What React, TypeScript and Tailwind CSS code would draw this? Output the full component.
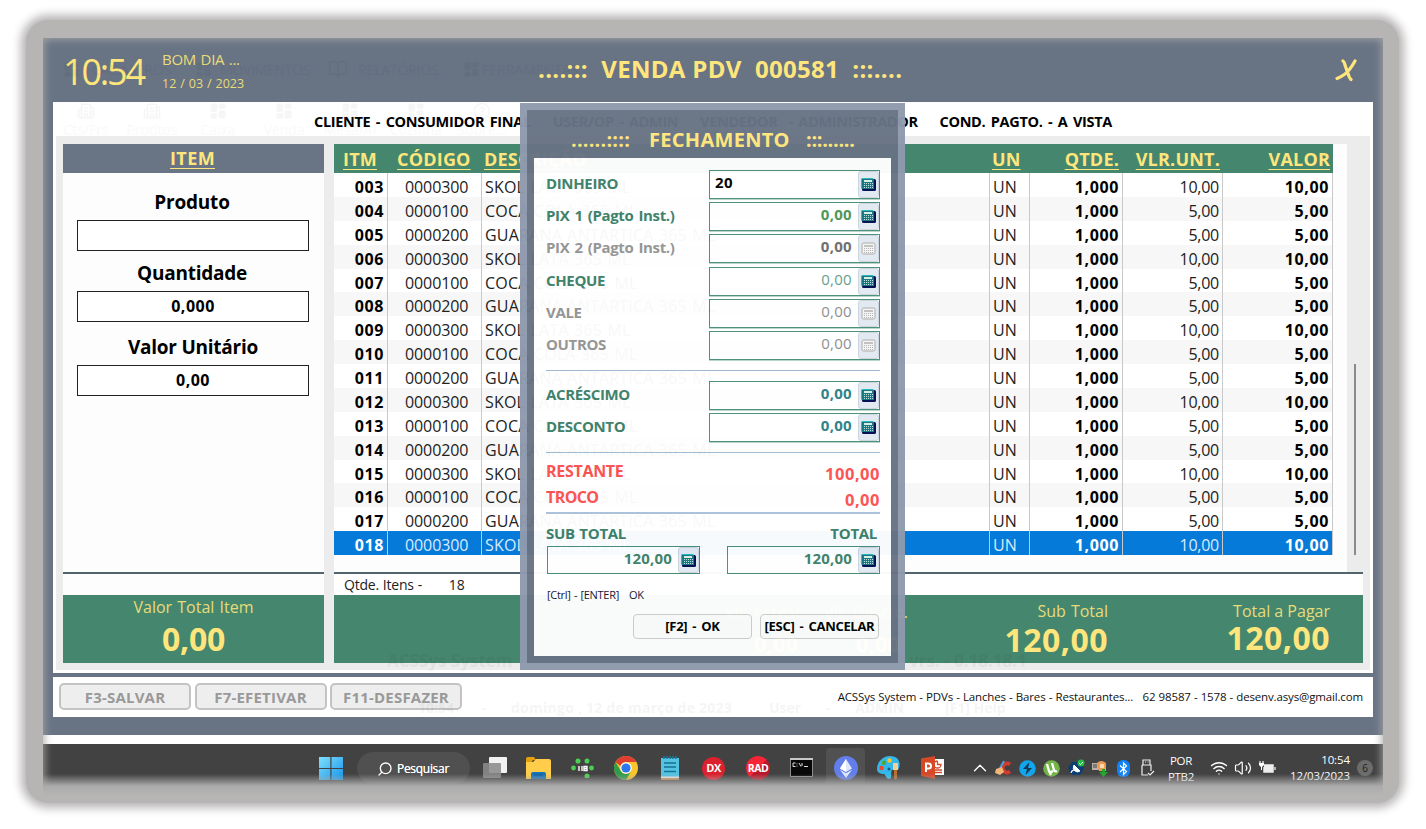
import React from "react";
import { Wifi, Volume2, ChevronUp, Search, LayoutDashboard, Building2, BookOpen, CircleHelp } from "lucide-react";

const products = ["SKOL LATA 365 ML", "COCA COLA 365 ML", "GUARANA ANTARTICA 365 ML"];
const codes = ["0000300", "0000100", "0000200"];
const rows = Array.from({ length: 16 }, (_, i) => ({
  item: String(i + 3).padStart(3, "0"),
  code: codes[i % 3],
  name: products[i % 3],
  price: i % 3 === 0 ? "10,00" : "5,00",
}));

const cols = "grid grid-cols-[54px_94px_508px_40px_93px_100px_110px]";

function Calc({ off = false }: { off?: boolean }) {
  return (
    <span className="flex h-full w-[21px] shrink-0 items-center justify-center rounded-[3px] border border-[#cbd5e1] bg-[#e3e9f0]">
      <svg width="15" height="13" viewBox="0 0 15 13" className="shrink-0">
        {off ? (
          <>
            <rect x="1" y="1" width="13" height="11" rx="1.5" fill="#f4f4f4" stroke="#a9a9a9" />
            <rect x="3" y="3" width="9" height="2" fill="#c2c2c2" />
            {[6, 8, 10].map((y) => [3, 5, 7, 9, 11].map((x) => <rect key={`${x}-${y}`} x={x} y={y} width="1" height="1" fill="#b5b5b5" />))}
          </>
        ) : (
          <>
            <rect x="1" y="1" width="14" height="12" rx="1.5" fill="#000a50" />
            <rect x="0" y="0" width="13" height="11" rx="1.5" fill="#22b8b8" />
            <rect x="1" y="1" width="12" height="10" fill="#16737c" />
            <rect x="3" y="2" width="8" height="2" fill="#d4eee8" />
            {[5, 7, 9].map((y) => [3, 5, 7, 9, 11].map((x) => <rect key={`${x}-${y}`} x={x} y={y} width="1" height="1" fill="#b9dedd" />))}
          </>
        )}
      </svg>
    </span>
  );
}

function Field({ value, tone, off, left }: { value: string; tone: string; off?: boolean; left?: boolean }) {
  return (
    <div className="flex h-[29px] w-[171px] border border-[#4a8f77] bg-white shadow-[0_1px_0_#b9d5ca]">
      <span className={`flex-1 text-[15px] leading-[23px] tracking-[0.3px] ${left ? "pl-[5px] text-left" : "pr-[6px] text-right"} ${tone}`}>{value}</span>
      <Calc off={off} />
    </div>
  );
}

function Payment({ label, labelTone, ...field }: { label: string; labelTone: string; value: string; tone: string; off?: boolean; left?: boolean }) {
  return (
    <div className="flex justify-between">
      <span className={`whitespace-pre text-[15px] font-bold leading-[27px] tracking-[-0.35px] [word-spacing:1.5px] ${labelTone}`}>{label}</span>
      <Field {...field} />
    </div>
  );
}

function Closing() {
  const on = "text-[#3c8068]";
  const off = "text-[#939393]";
  const action = "h-[25px] w-[119px] whitespace-nowrap rounded-[4px] border border-[#cfcfcf] bg-[#fdfdfd] tracking-[-0.3px] [word-spacing:2px]";
  return (
    <section className="absolute left-[477px] top-[65px] h-[567px] w-[385px] border-[7px] border-[#8f9aae] bg-[#687384] opacity-[0.97]">
      <h2 className="flex h-[48px] items-start whitespace-pre pl-[44px] pt-[15px] text-[20px] font-bold leading-[30px] text-[#ffe67c]">
        <span className="w-[78px] tracking-[0.2px]">......::::</span>
        <span className="w-[141px] tracking-[0.3px]">FECHAMENTO</span>
        <span className="ml-[16px] tracking-[-0.3px]">:::......</span>
      </h2>
      <div className="mx-[7px] h-[498px] bg-white pl-[12px] pr-[11px] pt-[12px]">
        <div className="flex flex-col gap-[3px]">
          <Payment label="DINHEIRO" labelTone={on} value="20" tone="font-bold text-black" left />
          <Payment label="PIX 1 (Pagto Inst.)" labelTone={on} value="0,00" tone="font-bold text-[#4d9453]" />
          <Payment label="PIX 2 (Pagto Inst.)" labelTone={off} value="0,00" tone="font-bold text-[#6c6c6c]" off />
          <div className="-mt-[2px] h-0" />
          <Payment label="CHEQUE" labelTone={on} value="0,00" tone="text-[#61a08a]" />
          <Payment label="VALE" labelTone={off} value="0,00" tone="text-[#8c8c8c]" off />
          <Payment label="OUTROS" labelTone={off} value="0,00" tone="text-[#8c8c8c]" off />
        </div>
        <div className="mt-[10px] h-[1px] bg-[#9db8d2]" />
        <div className="mt-[10px] flex flex-col gap-[3px]">
          <Payment label="ACRÉSCIMO" labelTone={on} value="0,00" tone="font-bold text-[#2c7f83]" />
          <Payment label="DESCONTO" labelTone={on} value="0,00" tone="font-bold text-[#2c7f83]" />
        </div>
        <div className="mt-[10px] h-[1px] bg-[#9dbbd3]" />
        <div className="mt-[5px] flex h-[26px] justify-between text-[16px] font-bold text-[#fc5050]">
          <span className="leading-[26px] tracking-[-0.3px]">RESTANTE</span>
          <span className="pt-[2px] text-[16.5px] leading-[28px] tracking-[0.5px]">100,00</span>
        </div>
        <div className="flex h-[28px] justify-between text-[16px] font-bold text-[#fc5050]">
          <span className="leading-[26px] tracking-[-0.6px]">TROCO</span>
          <span className="pt-[2px] text-[16.5px] leading-[28px] tracking-[0.5px]">0,00</span>
        </div>
        <div className="h-[2px] bg-[#aac1d9]" />
        <div className="mt-[7px] flex h-[25px] justify-between pr-[3px] text-[15px] font-bold leading-[25px] tracking-[-0.3px] text-[#3c8068] [word-spacing:1px]">
          <span>SUB TOTAL</span>
          <span>TOTAL</span>
        </div>
        <div className="flex justify-between pl-[1px]">
          <div className="flex h-[28px] w-[153px] border border-[#4a8f77] bg-white">
            <span className="flex-1 pr-[6px] text-right text-[15px] font-bold leading-[23px] tracking-[0.2px] text-[#3c8068]">120,00</span>
            <Calc />
          </div>
          <div className="flex h-[28px] w-[153px] border border-[#4a8f77] bg-white">
            <span className="flex-1 pr-[6px] text-right text-[15px] font-bold leading-[23px] tracking-[0.2px] text-[#3c8068]">120,00</span>
            <Calc />
          </div>
        </div>
        <p className="mt-[12px] whitespace-pre pl-[1px] text-[11px] leading-[18px] tracking-[-0.3px] text-[#111133] [word-spacing:0.8px]">[Ctrl] - [ENTER]   OK</p>
        <div className="mt-[10px] flex justify-end gap-[8px] pr-[1px] text-[13px] font-bold text-black">
          <button className={action}>[F2] - OK</button>
          <button className={action}>[ESC] - CANCELAR</button>
        </div>
      </div>
    </section>
  );
}

function ItemPanel() {
  return (
    <section className="flex w-[261px] flex-col bg-[#fdfdfd]">
      <h2 className="h-[29px] bg-[#697485] pr-[2px] text-center text-[18px] font-bold leading-[29px] tracking-[0.4px] text-[#ffe67c] underline decoration-1 underline-offset-[3px]">ITEM</h2>
      <div className="flex h-[399px] flex-col pl-[14px] pr-[15px] text-center font-bold text-black">
        <span className="mt-[14px] pr-[2px] text-[19px] leading-[30px] tracking-[-0.2px]">Produto</span>
        <div className="mt-[3px] h-[31px] border border-[#222] bg-white" />
        <span className="mt-[7px] pr-[2px] text-[19px] leading-[30px] tracking-[-0.25px]">Quantidade</span>
        <div className="mt-[3px] h-[31px] border border-[#222] bg-white text-[16px] leading-[29px] tracking-[0.5px]">0,000</div>
        <span className="mt-[10px] text-[19px] leading-[31px] tracking-[-0.25px]">Valor Unitário</span>
        <div className="mt-[2px] h-[31px] border border-[#222] bg-white text-[16px] leading-[29px] tracking-[0.5px]">0,00</div>
      </div>
      <div className="h-[2px] bg-[#52636e]" />
      <div className="h-[21px]" />
      <div className="h-[68px] bg-[#45866e] text-center text-[#ffe67c]">
        <div className="pt-[1px] text-[16px] leading-[22px] text-[#e8dc78] [word-spacing:1px]">Valor Total Item</div>
        <div className="text-[32px] font-bold leading-[42px] tracking-[-0.2px]">0,00</div>
      </div>
    </section>
  );
}

function SaleTable() {
  const head = "underline decoration-1 underline-offset-[3px]";
  return (
    <section className="flex w-[1029px] flex-col">
      <div className="flex h-[428px]">
        <div className="w-[1013px] bg-[#fdfdfd]">
          <div className={`${cols} h-[29px] w-[999px] bg-[#45866e] text-[18px] font-bold leading-[31px] tracking-[0.2px] text-[#ffe67c]`}>
            <span className={`pl-[9px] ${head}`}>ITM</span>
            <span className={`pl-[9px] ${head}`}>CÓDIGO</span>
            <span className={`pl-[2px] ${head}`}>DESCRIÇÃO</span>
            <span className={`pl-[2px] ${head}`}>UN</span>
            <span className={`pr-[4px] text-right ${head}`}>QTDE.</span>
            <span className={`pr-[3px] text-right ${head}`}>VLR.UNT.</span>
            <span className={`pr-[3px] text-right ${head}`}>VALOR</span>
          </div>
          <div className="grid h-[382px] w-[999px] grid-rows-[repeat(16,minmax(0,1fr))]">
            {rows.map((r, i) => (
              <div
                key={r.item}
                className={`${cols} items-stretch text-[16px] leading-[28px] [&>span]:overflow-hidden [&>span]:border-r [&>span]:border-[#c9c9c9] ${
                  i === 15 ? "bg-[#067ad9] text-[#d8eaff]" : i % 2 ? "bg-[#f7f7f7] text-[#222]" : "bg-white text-[#222]"
                }`}
              >
                <span className={`pr-[3px] text-right font-bold tracking-[0.6px] ${i === 15 ? "text-white" : "text-black"}`}>{r.item}</span>
                <span className="pl-[17px] tracking-[-0.1px]">{r.code}</span>
                <span className="pl-[3px] tracking-[0.2px] [word-spacing:1px]">{r.name}</span>
                <span className="pl-[3px] tracking-[0.1px]">UN</span>
                <span className={`pr-[3px] text-right font-bold tracking-[0.6px] ${i === 15 ? "text-white" : "text-black"}`}>1,000</span>
                <span className="pr-[3px] text-right tracking-[-0.25px]">{r.price}</span>
                <span className={`pr-[3px] text-right font-bold tracking-[0.6px] ${i === 15 ? "text-white" : "text-black"}`}>{r.price}</span>
              </div>
            ))}
          </div>
        </div>
        <div className="w-[16px] pl-[7px] pt-[220px]">
          <div className="h-[191px] w-[2px] bg-[#8b8b8b]" />
        </div>
      </div>
      <div className="h-[2px] bg-[#52636e]" />
      <div className="h-[21px] whitespace-pre bg-white pl-[10px] text-[14px] leading-[21px] tracking-[-0.2px] text-[#222] [word-spacing:0.4px]">Qtde. Itens -       18</div>
      <div className="flex h-[68px] justify-end bg-[#45866e] pr-[33px] text-right text-[#ffe67c]">
        <div className="w-[100px] pt-[5px] text-[16px] leading-[24px] text-[#e8dc78]">Vlr. Acresc.<div className="pr-[8px] text-[22px] font-bold leading-[38px] text-[#ffe67c]">0,00</div></div>
        <div className="w-[102px] pt-[5px] text-[16px] leading-[24px] text-[#e8dc78]">Vlr. Descto.<div className="pr-[8px] text-[22px] font-bold leading-[38px] text-[#ffe67c]">0,00</div></div>
        <div className="w-[200px]">
          <div className="pt-[5px] text-[16px] leading-[22px] text-[#e8dc78] [word-spacing:1px]">Sub Total</div>
          <div className="text-[32px] font-bold leading-[35px] tracking-[0.5px]">120,00</div>
        </div>
        <div className="w-[222px]">
          <div className="pt-[5px] text-[16px] leading-[22px] text-[#e8dc78]">Total a Pagar</div>
          <div className="text-[32px] font-bold leading-[32px] tracking-[0.5px]">120,00</div>
        </div>
      </div>
    </section>
  );
}

function Ghosts() {
  const labels = ["Cts/Frs", "Prodtos", "Caixa", "Venda", "Mesa/Al", "Cozinha", "Sobre..."];
  return (
    <div className="pointer-events-none absolute inset-0 text-black">
      <div className="absolute left-[20px] top-[20px] flex h-[22px] items-center whitespace-pre text-[14px] opacity-[0.035]">
        <LayoutDashboard size={17} fill="currentColor" />
        <span className="ml-[12px] w-[103px]">CADASTROS</span>
        <LayoutDashboard size={17} fill="currentColor" />
        <span className="ml-[8px] w-[108px] tracking-[-0.3px]">MOVIMENTOS</span>
        <BookOpen size={20} />
        <span className="ml-[10px] w-[105px] tracking-[-0.2px]">RELATÓRIOS</span>
        <LayoutDashboard size={17} fill="currentColor" />
        <span className="ml-[2px]">FERRAMENTAS</span>
      </div>
      <div className="absolute left-[10px] top-[64px] grid grid-cols-7 opacity-[0.03]">
        {labels.map((l, i) => (
          <div key={l} className="flex w-[66px] flex-col items-center text-[14px] leading-[19px]">
            {i < 2 ? <Building2 size={18} /> : i === 6 ? <CircleHelp size={18} /> : <LayoutDashboard size={18} fill="currentColor" />}
            <span className="opacity-60">{l}</span>
          </div>
        ))}
      </div>
      <div className="absolute left-[344px] top-[613px] whitespace-pre text-[17px] font-bold leading-[20px] opacity-[0.04]">ACSSys System</div>
      <div className="absolute left-[866px] top-[613px] whitespace-pre text-[17px] font-bold leading-[20px] opacity-[0.04]">vrs. - 0.18.18.1</div>
      <div className="absolute left-[375px] top-[661px] flex text-[14px] font-bold leading-[18px] opacity-[0.035]">
        <span className="w-[64px]">10:54</span>
        <span className="w-[29px]">-</span>
        <span className="w-[258px] tracking-[0.25px]">domingo , 12 de março de 2023</span>
        <span className="w-[57px]">User</span>
        <span className="w-[29px]">-</span>
        <span className="w-[90px]">ADMIN</span>
        <span>[F1] Help</span>
      </div>
    </div>
  );
}

function AppIcons() {
  return (
    <>
      <svg className="mt-[13px]" width="24" height="23" viewBox="0 0 24 23">
        <defs><linearGradient id="win" x1="0" y1="0" x2="1" y2="1"><stop stopColor="#7fe0fd" /><stop offset="1" stopColor="#1592e8" /></linearGradient></defs>
        <path fill="url(#win)" d="M0 0h11.3v11H0zM12.5 0H24v11H12.5zM0 12h11.3v11H0zM12.5 12H24v11H12.5z" />
      </svg>
      <div className="ml-[14px] mt-[8px] flex h-[32px] w-[113px] items-center rounded-full bg-[#505050] pl-[20px] pt-[2px] text-[12px] text-white">
        <Search size={16} strokeWidth={2} className="-scale-x-100" />
        <span className="ml-[4px] tracking-[-0.3px] [text-shadow:0_0_0.5px_#fff]">Pesquisar</span>
      </div>
      <svg className="ml-[13px] mt-[13px]" width="24" height="22" viewBox="0 0 24 22"><rect x="6" width="18" height="16" rx="1" fill="#f2f2f2" /><rect y="6" width="18" height="15" rx="1" fill="#8b8b8b" fillOpacity=".88" /></svg>
      <svg className="ml-[19px] mt-[13px]" width="25" height="22" viewBox="0 0 25 22"><path d="M0 2q0-2 2-2h6l2 3h-3L5 6H0z" fill="#e5a00d" /><path d="M0 5h7l3-3h13q2 0 2 2v18H0z" fill="#ffcd49" /><path d="M5 22v-5q0-2 2-2h11q2 0 2 2v5z" fill="#1672b8" /><path d="M8 18h9" stroke="#0d548c" /></svg>
      <svg className="ml-[20px] mt-[14px]" width="23" height="20" viewBox="0 0 23 20"><g fill="#4fce54"><circle cx="7" cy="3" r="2.5" /><circle cx="16" cy="3" r="2.5" /><circle cx="2.5" cy="10" r="2.4" /><circle cx="20.5" cy="10" r="2.4" /><circle cx="16" cy="18" r="2.5" /></g><path d="M8 8v5M11 8v5M13 8.5h3v4h-3zM13 10.5h3" stroke="#fff" fill="none" strokeWidth="1.4" /></svg>
      <svg className="ml-[20px] mt-[12px]" width="24" height="24" viewBox="0 0 24 24"><circle cx="12" cy="12" r="12" fill="#f7c52c" /><path d="M1.6 6A12 12 0 0 1 22.4 6H12a6 6 0 0 0-5.5 4z" fill="#e13d31" /><path d="M1.6 6A12 12 0 0 0 12 24l5.2-9A6 6 0 0 1 6.8 15z" fill="#329c4b" /><circle cx="12" cy="12" r="5.8" fill="#fff" /><circle cx="12" cy="12" r="4.6" fill="#2b78ec" /></svg>
      <svg className="ml-[23px] mt-[12px]" width="18" height="24" viewBox="0 0 18 24"><path d="M0 2h18v22H0z" fill="#54c3e3" /><path d="M0 22h18v2H0z" fill="#c78645" /><path d="M0 20.5h18v1.7H0z" fill="#e8e8e8" /><path d="M3 0v3M6 0v3M9 0v3M12 0v3M15 0v3" stroke="#167b9d" strokeWidth="1.6" /><path d="M3 7h12M3 11h12M3 15.5h12" stroke="#17718f" strokeWidth="1.7" /></svg>
      <span className="ml-[23px] mt-[13px] flex h-[23px] w-[23px] items-center justify-center rounded-full bg-[#dc202d] text-[11px] font-bold tracking-[-0.5px] text-white">DX</span>
      <span className="ml-[21px] mt-[12px] flex h-[24px] w-[24px] items-center justify-center rounded-full bg-[linear-gradient(135deg,#f52536_50%,#b8182a_52%)] pt-[1px] text-[10.5px] font-bold tracking-[-0.4px] text-white">RAD</span>
      <svg className="ml-[20px] mt-[14px]" width="23" height="19" viewBox="0 0 23 19"><path d="M.5.5h22v18H.5z" fill="#080808" stroke="#8e8e8e" strokeWidth="1" /><path d="M0 0h23v2H0z" fill="#c8c8c8" /><path d="M5.500 5H3v3.500h2.500M7 5.500v.8M7 7.700v.8M9 5l2 3.500M12 5v3M14 8.500h4" stroke="#ddd" fill="none" /></svg>
      <span className="ml-[13px] mt-[4px] flex h-[38px] w-[39px] justify-center rounded-t-[4px] bg-[#515151] pt-[8px]">
        <svg width="24" height="24" viewBox="0 0 24 24"><circle cx="12" cy="12" r="12" fill="#627eea" /><path d="M12 3l6 9.5-6 3.5-6-3.5z" fill="#fff" fillOpacity=".8" /><path d="M12 3v13l-6-3.5z" fill="#fff" /><path d="M12 17.300l6-3.600L12 22l-6-8.300z" fill="#e3e9fc" /></svg>
      </span>
      <svg className="ml-[12px] mt-[12px]" width="24" height="24" viewBox="0 0 24 24"><path d="M13 0C21 0 24 6 22 12c-1 3-5 1-7 2-2 2 1 9-3 9-3 0-3-4-5-5-3 0-7-1-7-5C0 6 6 0 13 0z" fill="#35b8e9" /><circle cx="4.5" cy="12" r="2.2" fill="#e94a27" /><circle cx="7" cy="6.7" r="2.2" fill="#4da832" /><circle cx="12.500" cy="4.500" r="2.200" fill="#f8c526" /><circle cx="12" cy="13" r="1.500" fill="#155b84" /><path d="M16 7h5v7h-5z" fill="#f5cd96" /><path d="M17 14h3v8l-1.500 2-1.500-2z" fill="#b66f2c" /></svg>
      <svg className="ml-[20px] mt-[12px]" width="23" height="23" viewBox="0 0 23 23"><path d="M11 3h12v16H11z" fill="#fff" /><path d="M16.500 5v3.500H20a3.500 3.500 0 1 1-3.500-3.500M14 14h7M14 16.500h7" stroke="#d14b2b" fill="none" strokeWidth="1.300" /><path d="M0 2.500L14 0v23L0 20z" fill="#d64826" /><path d="M5 16V7.500h2.500a2.500 2.500 0 0 1 0 5H5" stroke="#fff" fill="none" strokeWidth="2" /></svg>
    </>
  );
}

function Tray() {
  return (
    <div className="ml-auto flex pr-[10px] text-white">
      <ChevronUp size={22} strokeWidth={1.4} className="mt-[13px]" />
      <svg className="ml-[4px] mt-[16px]" width="17" height="16" viewBox="0 0 17 16"><path d="M15 4.500a4.500 4.500 0 1 0 0 7" stroke="#d63a2f" strokeWidth="3.800" fill="none" /><path d="M9 1L5 8" stroke="#4aa0db" strokeWidth="2" /><path d="M1 9l6-2 2 5-4 3-5-2z" fill="#f2b777" /></svg>
      <svg className="ml-[7px] mt-[16px]" width="17" height="17" viewBox="0 0 17 17"><circle cx="8.500" cy="8.500" r="8.300" fill="#13a5ec" /><path d="M10.500 2L4 9h4l-1.500 6L13 8H9z" fill="#123952" /></svg>
      <svg className="ml-[7px] mt-[16px]" width="17" height="17" viewBox="0 0 17 17"><circle cx="8.500" cy="8.500" r="8.300" fill="#72b546" /><path d="M4 4l2 7q1 2 4 0M9 3l2 7q1 2 3 1M6 11l2 4" stroke="#fff" strokeWidth="2.300" fill="none" /></svg>
      <svg className="ml-[8px] mt-[15px]" width="17" height="18" viewBox="0 0 17 18"><path d="M4 3h8l4 6-4 7H4L0 9z" fill="#0b3c73" /><path d="M3 14q0-3 3-3M6 6q-2 4 1 6t5 0z" stroke="#fff" fill="#fff" /><circle cx="13" cy="4" r="3.500" fill="#24bc45" /><path d="M11 4l1.500 1.500L15 3" stroke="#fff" fill="none" /></svg>
      <svg className="ml-[7px] mt-[16px]" width="17" height="17" viewBox="0 0 17 17"><path d="M0 3h7v7H0z" fill="#b7b1a7" /><path d="M2 4v4M4 4v4" stroke="#454545" /><path d="M5 3q4-4 9 0v8H7z" fill="#ed9a53" /><path d="M8 4h4v4H8z" fill="#fbd7af" /><path d="M10 9h3v3h3l-4.500 5L7 12h3z" fill="#24a52e" /></svg>
      <svg className="ml-[8px] mt-[16px]" width="13" height="17" viewBox="0 0 13 17"><rect width="13" height="17" rx="6" fill="#1082f4" /><path d="M3 5.500l6.500 6-3 3V3l3 3L3 12" stroke="#fff" fill="none" strokeWidth="1.200" /></svg>
      <svg className="ml-[11px] mt-[15px]" width="14" height="18" viewBox="0 0 14 18" fill="none" stroke="#eee" strokeWidth="1.200"><path d="M2 6V1h7v5M1 6h9v6M1 6v10h6M4 3h1M6.500 3h1M7 14l2 2 4-4" /></svg>
      <div className="ml-[12px] mt-[9px] w-[28px] text-center text-[11.5px] leading-[16px] tracking-[-0.3px]">POR<br />PTB2</div>
      <Wifi size={18} strokeWidth={1.8} className="ml-[15px] mt-[15px]" />
      <Volume2 size={18} strokeWidth={1.6} className="ml-[6px] mt-[15px]" />
      <svg className="ml-[7px] mt-[16px]" width="17" height="15" viewBox="0 0 17 15"><path d="M5 5h9v7H5V7" fill="#eee" stroke="#eee" strokeWidth="1.500" /><path d="M16 7v3M1 1v3M4 1v3" stroke="#eee" strokeWidth="1.300" /><path d="M0 3h5v2L3 7v3H2V7L0 5z" fill="#fff" /></svg>
      <div className="ml-[13px] mt-[8px] w-[61px] whitespace-nowrap text-right text-[11.5px] leading-[16px] tracking-[-0.1px]">10:54<br /><span className="-ml-[4px]">12/03/2023</span></div>
      <span className="ml-[7px] mt-[16px] flex h-[16px] w-[16px] items-center justify-center rounded-full bg-[#6c6c6c] text-[10px] text-[#222]">6</span>
    </div>
  );
}

export default function App() {
  const button = "h-[27px] w-[132px] whitespace-nowrap rounded-[5px] border-2 border-[#c3c3c3] bg-[#eeeeee] text-[15px] font-bold leading-[25px] tracking-[0.2px] text-[#999]";
  return (
    <main className="h-[829px] w-[1426px] overflow-hidden bg-white pl-[26px] pt-[20px] font-['Open_Sans','Noto_Sans',sans-serif]">
      <div className="h-[783px] w-[1373px] rounded-[22px] bg-[#b7b4b4] pl-[17px] pt-[18px] shadow-[0_0_10px_5px_#b7b4b4]">
        <div className="relative h-[748px] w-[1340px] bg-[#687384]">
          <header className="flex h-[64px] text-[#ffe67c]">
            <div className="w-[119px] pl-[20px] pt-[9px] text-[36px] leading-[50px] tracking-[-2.2px]">10:54</div>
            <div className="w-[376px] pt-[9px] text-[#e8dc78]">
              <div className="text-[15px] leading-[24px] tracking-[-0.3px] [word-spacing:1px]">BOM DIA ...</div>
              <div className="text-[12.5px] leading-[26px] [word-spacing:0.7px]">12 / 03 / 2023</div>
            </div>
            <h1 className="whitespace-pre pt-[12px] text-[24px] font-bold leading-[38px] tracking-[0.3px] [word-spacing:0.1px]">....:::  VENDA PDV  000581  :::....</h1>
            <svg className="ml-auto mr-[25px] mt-[21px]" width="23" height="23" viewBox="0 0 23 23" fill="none" stroke="#ffe67c" strokeWidth="3.2" strokeLinecap="round"><path d="M8 2q1.500 1 2 4l3.500 10q.7 3 2.500 4.500M20 2Q15 11 10 15q-4 3-8 4.500" /></svg>
          </header>
          <div className="mx-[10px] h-[571px] bg-white">
            <div className="h-[34px] whitespace-pre pl-[261px] text-[14.5px] font-bold leading-[40px] tracking-[-0.32px] text-black [word-spacing:2px]">CLIENTE - CONSUMIDOR FINAL    USER/OP - ADMIN    VENDEDOR  - ADMINISTRADOR    COND. PAGTO. - A VISTA</div>
            <div className="mx-[3px] flex h-[534px] gap-[10px] bg-[#ececec] pl-[7px] pt-[8px] [&>section]:h-[519px]">
              <ItemPanel />
              <SaleTable />
            </div>
          </div>
          <footer className="mx-[10px] mt-[4px] flex h-[40px] bg-white pl-[6px] pr-[10px] pt-[6px]">
            <div className="flex gap-[3.5px]">
              <button className={button}>F3-SALVAR</button>
              <button className={button}>F7-EFETIVAR</button>
              <button className={button}>F11-DESFAZER</button>
            </div>
            <span className="ml-auto whitespace-pre text-[11.5px] leading-[28px] tracking-[-0.15px] text-[#111] [word-spacing:0.35px]">ACSSys System - PDVs - Lanches - Bares - Restaurantes...   62 98587 - 1578 - desenv.asys@gmail.com</span>
          </footer>
          <div className="mt-[18px] h-[9px] bg-white" />
          <div className="flex h-[42px] bg-[#424242] pl-[276px]">
            <AppIcons />
            <Tray />
          </div>
          <Ghosts />
          <Closing />
          <div className="pointer-events-none absolute inset-x-0 -bottom-[9px] top-0 shadow-[inset_0_0_8px_1px_#a6a6a6]" />
          <div className="pointer-events-none absolute inset-x-0 bottom-0 h-[12px] bg-gradient-to-t from-[#acabab] to-transparent" />
          <div className="pointer-events-none absolute inset-x-0 -bottom-[10px] h-[10px] bg-gradient-to-b from-[#acabab] to-[#b7b4b4]" />
        </div>
      </div>
    </main>
  );
}
